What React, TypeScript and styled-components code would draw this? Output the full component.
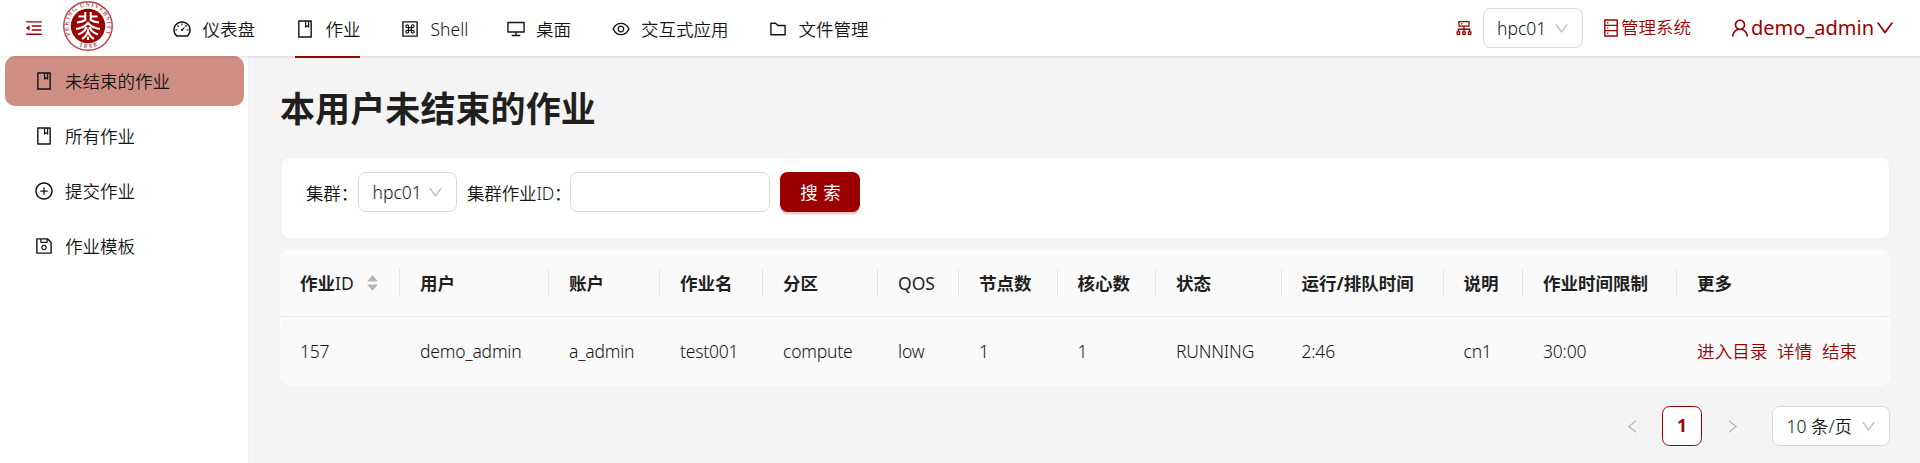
import React from 'react';
import styled, { createGlobalStyle } from 'styled-components';
import {
  AiOutlineMenuFold, AiOutlineDashboard, AiOutlineBook, AiOutlineMacCommand,
  AiOutlineDesktop, AiOutlineEye, AiOutlineFolder, AiOutlineCluster,
  AiOutlineDatabase, AiOutlineUser, AiOutlineDown, AiOutlinePlusCircle,
  AiOutlineSave, AiOutlineLeft, AiOutlineRight, AiFillCaretUp, AiFillCaretDown,
} from 'react-icons/ai';

const RED = '#9b0000';

const GlobalStyle = createGlobalStyle`
  * { box-sizing: border-box; }
  body {
    margin: 0;
    background: #f4f4f4;
    color: #141414;
    font-family: "Noto Sans", "Noto Sans CJK SC", sans-serif;
    font-size: 17.5px;
    font-weight: 350;
    line-height: 27.5px;
  }
  svg { display: block; flex: none; }
`;

const Page = styled.div`
  height: 463px;
  display: flex;
  flex-direction: column;
  overflow: hidden;
`;

const Header = styled.header`
  position: relative;
  z-index: 1;
  height: 56px;
  flex: none;
  display: flex;
  align-items: center;
  padding: 0 24px;
  background: #fff;
  box-shadow: 0 1px 3px rgba(0, 0, 0, 0.12);
`;

const LogoBox = styled.div`
  margin: 0 59px 4px 19px;
`;

const Nav = styled.nav`
  display: flex;
  gap: 40px;
  height: 56px;
`;

const NavItem = styled.a<{ $active?: boolean; $width: number }>`
  width: ${p => p.$width}px;
  height: ${p => (p.$active ? 58 : 56)}px;
  padding-top: 2px;
  display: flex;
  align-items: center;
  gap: 10.5px;
  white-space: nowrap;
  border-bottom: ${p => (p.$active ? `2px solid ${RED}` : '0')};
  span { padding-top: 1px; }
`;

const HeaderRight = styled.div`
  margin-left: auto;
  display: flex;
  align-items: center;
  color: ${RED};
`;

const ClusterIcon = styled(AiOutlineCluster)`
  margin-right: 8.5px;
`;

const SelectBox = styled.div<{ $width: number }>`
  width: ${p => p.$width}px;
  height: 40px;
  flex: none;
  padding: 0 12px 0 13.5px;
  display: flex;
  align-items: center;
  justify-content: space-between;
  background: #fff;
  border: 1px solid #d9d9d9;
  border-radius: 7.5px;
  color: #141414;
  white-space: nowrap;
  svg { color: #bfbfbf; }
  span { padding-top: 1px; }
`;

const AdminLink = styled.a`
  display: flex;
  align-items: center;
  gap: 0.5px;
  margin: 0 38px 0 18px;
`;

const UserMenu = styled.a`
  display: flex;
  align-items: center;
  font-size: 20px;
  font-weight: 400;
`;

const Body = styled.div`
  flex: 1;
  display: flex;
`;

const Sidebar = styled.aside`
  width: 249px;
  flex: none;
  padding: 0 4px 0 5px;
  display: flex;
  flex-direction: column;
  gap: 5px;
  background: #fff;
  border-right: 1px solid #f0f0f0;
`;

const SideItem = styled.a<{ $active?: boolean }>`
  height: 50px;
  padding-left: 29px;
  display: flex;
  align-items: center;
  gap: 11px;
  border-radius: 10px;
  background: ${p => (p.$active ? '#cf8e83' : 'transparent')};
  span { padding-top: 1px; }
`;

const Main = styled.main`
  flex: 1;
  padding: 31px 30px 0 32px;
`;

const Title = styled.h1`
  margin: 0 0 26px -1px;
  font-size: 35px;
  line-height: 44px;
  font-weight: 700;
  letter-spacing: 0.1px;
  color: #1f1f1f;
`;

const FilterCard = styled.form`
  height: 82px;
  padding: 14px 24px 0;
  display: flex;
  align-items: flex-start;
  background: #fff;
  border: 1px solid #f0f0f0;
  border-radius: 8px;
`;

const Label = styled.label<{ $width: number }>`
  width: ${p => p.$width}px;
  line-height: 42px;
  white-space: nowrap;
  letter-spacing: -0.15px;
  & ~ & { margin-left: 10px; }
`;

const TextInput = styled.input`
  width: 200px;
  height: 40px;
  margin-right: 10px;
  border: 1px solid #d9d9d9;
  border-radius: 7.5px;
  background: #fff;
`;

const SearchButton = styled.button`
  width: 80px;
  height: 40px;
  padding: 2px 0 0 1px;
  border: 0;
  border-radius: 7.5px;
  background: ${RED};
  color: #fff;
  font: inherit;
  font-weight: 400;
  word-spacing: 1px;
  box-shadow: 0 2.5px 0 rgba(155, 0, 0, 0.2);
`;

const TableCard = styled.div`
  width: 1610px;
  margin: 10px 0 0 -1px;
  border-radius: 10px;
  background: #fff;
  overflow: hidden;
`;

const Row = styled.div<{ $head?: boolean }>`
  display: grid;
  grid-template-columns: 120px 149px 111px 103px 115px 81px 98.5px 98.5px 125.5px 162px 79.5px 154px 1fr;
  height: ${p => (p.$head ? 68 : 69)}px;
  align-items: center;
  background: #fafafa;
  border-bottom: ${p => (p.$head ? '1px solid #e9e9e9' : '0')};
  border-radius: ${p => (p.$head ? 0 : '10px')};
`;

const HeadCell = styled.div`
  height: 28px;
  padding: 2px 0 0 20px;
  display: flex;
  align-items: center;
  font-weight: 700;
  color: #1f1f1f;
  white-space: nowrap;
  border-right: 1px solid #e6e6e6;
  &:last-child { border-right: 0; }
`;

const LatinHead = styled.span`
  font-weight: 400;
`;

const Sorter = styled.span`
  display: flex;
  flex-direction: column;
  margin: 0 19px 2px auto;
  color: #b3b3b3;
  svg + svg { margin-top: -6px; }
`;

const Cell = styled.div`
  padding-left: 20px;
  white-space: nowrap;
  letter-spacing: -0.2px;
`;

const Actions = styled(Cell)`
  display: flex;
  gap: 9.5px;
  letter-spacing: 0.15px;
  color: ${RED};
`;

const Pagination = styled.div`
  display: flex;
  justify-content: flex-end;
  align-items: center;
  margin-top: 20px;
`;

const PageArrow = styled.span`
  width: 40px;
  height: 40px;
  margin-right: 10px;
  display: grid;
  place-items: center;
  color: #b8b8b8;
`;

const PageNumber = styled.span`
  width: 40px;
  height: 40px;
  margin-right: 10px;
  display: grid;
  place-items: center;
  background: #fff;
  border: 1px solid ${RED};
  border-radius: 7.5px;
  color: ${RED};
  font-weight: 700;
`;

const SizeSlot = styled.div`
  margin-left: 10px;
`;

function Logo() {
  return (
    <svg width="50" height="50" viewBox="0 0 100 100">
      <defs>
        <path id="arcTop" d="M15.5 68 A39 39 0 1 1 84.5 68" />
        <path id="arcBottom" d="M20 83 A45 45 0 0 0 80 83" />
      </defs>
      <circle cx="50" cy="50" r="48.5" fill="#fff" stroke="#b5434a" strokeWidth="2.8" />
      <circle cx="50" cy="50" r="34.5" fill={RED} />
      <text fontFamily="Liberation Serif" fontWeight="700" fontSize="12" fill="#b9545b">
        <textPath href="#arcTop" textLength="158">PEKING UNIVERSITY</textPath>
      </text>
      <text fontFamily="Liberation Serif" fontWeight="700" fontSize="13" fill="#b9545b">
        <textPath href="#arcBottom" startOffset="50%" textAnchor="middle" textLength="38">1898</textPath>
      </text>
      <g fill="none" stroke="#fff" strokeWidth="4.4">
        <path d="M44.5 22V40M44.5 31H31M44.5 38Q38 42 28 43" />
        <path d="M55.5 22V40M55.5 31H69M55.5 38Q62 42 72 43" />
        <path d="M26 56Q42 54 50 44Q58 54 74 56" />
        <path d="M30 67Q44 62 47 52M70 67Q56 62 53 52" />
        <path d="M38 76Q47 71 50 60Q53 71 62 76" />
        <path d="M50 71V78" />
      </g>
    </svg>
  );
}

const navItems = [
  { icon: AiOutlineDashboard, text: '仪表盘', width: 83 },
  { icon: AiOutlineBook, text: '作业', width: 65, active: true },
  { icon: AiOutlineMacCommand, text: 'Shell', width: 65.5 },
  { icon: AiOutlineDesktop, text: '桌面', width: 65 },
  { icon: AiOutlineEye, text: '交互式应用', width: 117.5 },
  { icon: AiOutlineFolder, text: '文件管理', width: 100 },
];

const sideItems = [
  { icon: AiOutlineBook, text: '未结束的作业', active: true },
  { icon: AiOutlineBook, text: '所有作业' },
  { icon: AiOutlinePlusCircle, text: '提交作业' },
  { icon: AiOutlineSave, text: '作业模板' },
];

const columns = ['用户', '账户', '作业名', '分区', 'QOS', '节点数', '核心数', '状态', '运行/排队时间', '说明', '作业时间限制', '更多'];
const job = ['157', 'demo_admin', 'a_admin', 'test001', 'compute', 'low', '1', '1', 'RUNNING', '2:46', 'cn1', '30:00'];

function Select({ value, width }: { value: string; width: number }) {
  return (
    <SelectBox $width={width}>
      <span>{value}</span>
      <AiOutlineDown size={17} />
    </SelectBox>
  );
}

export default function App() {
  return (
    <Page>
      <GlobalStyle />
      <Header>
        <AiOutlineMenuFold size={20} color={RED} />
        <LogoBox><Logo /></LogoBox>
        <Nav>
          {navItems.map(({ icon: Icon, text, width, active }) => (
            <NavItem key={text} $active={active} $width={width}>
              <Icon size={20} />
              <span>{text}</span>
            </NavItem>
          ))}
        </Nav>
        <HeaderRight>
          <ClusterIcon size={20} />
          <Select value="hpc01" width={100} />
          <AdminLink><AiOutlineDatabase size={20} />管理系统</AdminLink>
          <UserMenu><AiOutlineUser size={22} />demo_admin<AiOutlineDown size={22} /></UserMenu>
        </HeaderRight>
      </Header>
      <Body>
        <Sidebar>
          {sideItems.map(({ icon: Icon, text, active }) => (
            <SideItem key={text} $active={active}>
              <Icon size={20} />
              <span>{text}</span>
            </SideItem>
          ))}
        </Sidebar>
        <Main>
          <Title>本用户未结束的作业</Title>
          <FilterCard>
            <Label $width={52}>集群：</Label>
            <Select value="hpc01" width={99} />
            <Label $width={103}>集群作业ID：</Label>
            <TextInput />
            <SearchButton type="button">搜 索</SearchButton>
          </FilterCard>
          <TableCard>
            <Row $head>
              <HeadCell>
                作业<LatinHead>ID</LatinHead>
                <Sorter><AiFillCaretUp size={15} /><AiFillCaretDown size={15} /></Sorter>
              </HeadCell>
              {columns.map(name => (
                <HeadCell key={name}>{name === 'QOS' ? <LatinHead>{name}</LatinHead> : name}</HeadCell>
              ))}
            </Row>
            <Row>
              {job.map((value, i) => <Cell key={i}>{value}</Cell>)}
              <Actions><span>进入目录</span><span>详情</span><span>结束</span></Actions>
            </Row>
          </TableCard>
          <Pagination>
            <PageArrow><AiOutlineLeft size={17} /></PageArrow>
            <PageNumber>1</PageNumber>
            <PageArrow><AiOutlineRight size={17} /></PageArrow>
            <SizeSlot><Select value="10 条/页" width={118} /></SizeSlot>
          </Pagination>
        </Main>
      </Body>
    </Page>
  );
}
